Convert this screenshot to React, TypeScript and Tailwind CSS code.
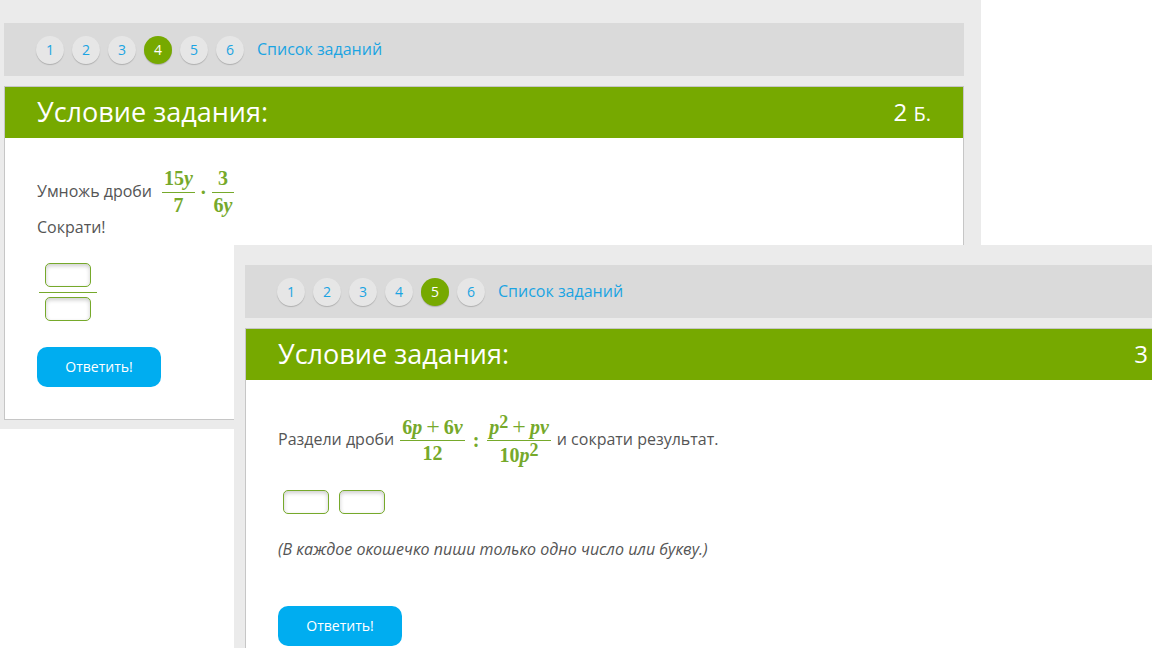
import type { ReactNode } from "react";

interface TaskNavProps {
  active: number;
}

interface TaskCardProps {
  score: ReactNode;
  headerClass: string;
  children: ReactNode;
}

interface FractionProps {
  top: ReactNode;
  bottom: ReactNode;
}

const TASKS = [1, 2, 3, 4, 5, 6];

function TaskNav({ active }: TaskNavProps) {
  return (
    <nav className="flex h-[53px] items-center bg-[#dadada] pl-8">
      <ul className="flex gap-2">
        {TASKS.map((n) => (
          <li key={n}>
            <a
              href={`#task-${n}`}
              className={
                n === active
                  ? "flex size-7 items-center justify-center rounded-full bg-[#76a900] text-sm text-white shadow-[0_1px_1px_rgba(0,0,0,0.2)]"
                  : "flex size-7 items-center justify-center rounded-full bg-[#e6e6e6] text-sm text-[#1ba4e2] shadow-[0_1px_1px_rgba(0,0,0,0.2)]"
              }
            >
              {n}
            </a>
          </li>
        ))}
      </ul>
      <a href="#tasks" className="ml-[13px] pb-[2px] text-base text-[#1ba4e2]">
        Список заданий
      </a>
    </nav>
  );
}

function TaskCard({ score, headerClass, children }: TaskCardProps) {
  return (
    <section className="mt-[10px] border border-[#c6c6c6] bg-white">
      <header className={`flex h-[51px] items-center justify-between bg-[#76a900] pl-8 text-white ${headerClass}`}>
        <h2 className="text-[27px]">Условие задания:</h2>
        <span className="pb-[2px] text-2xl">{score}</span>
      </header>
      <div className="px-8">{children}</div>
    </section>
  );
}

function Var({ children }: { children: ReactNode }) {
  return <i className="italic">{children}</i>;
}

function Sup({ children }: { children: ReactNode }) {
  return <sup className="static align-[6px] text-lg leading-none">{children}</sup>;
}

function Plus() {
  return <span className="mx-1 text-2xl leading-none font-normal">+</span>;
}

function Fraction({ top, bottom }: FractionProps) {
  return (
    <span className="inline-flex flex-col items-center text-center">
      <span className="flex h-[27px] items-center px-[2px] pb-[2px] whitespace-nowrap">
        <span className="leading-none">{top}</span>
      </span>
      <span className="h-px w-full bg-[#76a92b]" />
      <span className="flex h-[26px] items-center px-[2px] pb-[2px] whitespace-nowrap">
        <span className="leading-none">{bottom}</span>
      </span>
    </span>
  );
}

function Formula({ children }: { children: ReactNode }) {
  return (
    <span className="flex items-center font-['Liberation_Serif',serif] text-xl font-bold text-[#76a92b]">
      {children}
    </span>
  );
}

function AnswerInput({ label }: { label: string }) {
  return (
    <input
      type="text"
      aria-label={label}
      className="block h-6 w-[46px] rounded-[5px] border border-[#76a92b] bg-white px-1 text-center text-sm shadow-[inset_0_2px_4px_rgba(0,0,0,0.2)] outline-none"
    />
  );
}

function SubmitButton() {
  return (
    <button type="submit" className="block h-10 w-[124px] rounded-[10px] bg-[#00adf0] text-sm text-white">
      Ответить!
    </button>
  );
}

export default function App() {
  return (
    <div className="relative h-screen overflow-hidden bg-white font-['Open_Sans',sans-serif] text-base text-[#555]">
      <main className="mr-[171px] bg-[#ebebeb] pt-[23px] pr-[17px] pb-[9px] pl-1">
        <TaskNav active={4} />
        <TaskCard
          headerClass="pr-8"
          score={
            <>
              2 <span className="text-xl">Б.</span>
            </>
          }
        >
          <form className="pt-[27px] pb-8" onSubmit={(e) => e.preventDefault()}>
            <div className="flex items-center gap-[10px]">
              <p className="pb-[2px]">Умножь дроби</p>
              <Formula>
                <Fraction top={<>15<Var>y</Var></>} bottom="7" />
                <span className="mx-[5px]">·</span>
                <Fraction top="3" bottom={<>6<Var>y</Var></>} />
              </Formula>
            </div>
            <p className="-mt-1">Сократи!</p>
            <div className="mt-6 ml-[2px] flex w-[58px] flex-col items-center">
              <AnswerInput label="Числитель" />
              <span className="mt-[5px] mb-1 h-px w-full bg-[#76a92b]" />
              <AnswerInput label="Знаменатель" />
            </div>
            <div className="mt-[26px]">
              <SubmitButton />
            </div>
          </form>
        </TaskCard>
      </main>

      {/* second task lies over the first one */}
      <div className="absolute top-[245px] right-0 bottom-0 left-[234px] overflow-hidden bg-[#ebebeb] pt-5 pl-[11px]">
        <TaskNav active={5} />
        <div className="-mr-px">
          <TaskCard headerClass="pr-1" score="3">
            <form className="pt-[33px] pb-8" onSubmit={(e) => e.preventDefault()}>
              <div className="flex items-center gap-[6px]">
                <p className="pb-[2px]">Раздели дроби</p>
                <Formula>
                  <Fraction top={<>6<Var>p</Var><Plus />6<Var>v</Var></>} bottom="12" />
                  <span className="mx-2">:</span>
                  <Fraction
                    top={<><Var>p</Var><Sup>2</Sup><Plus /><Var>pv</Var></>}
                    bottom={<>10<Var>p</Var><Sup>2</Sup></>}
                  />
                </Formula>
                <p className="pb-[2px]">и сократи результат.</p>
              </div>
              <div className="mt-[23px] ml-[5px] flex gap-[10px]">
                <AnswerInput label="Первый множитель" />
                <AnswerInput label="Второй множитель" />
              </div>
              <p className="mt-[23px] italic">(В каждое окошечко пиши только одно число или букву.)</p>
              <div className="mt-[45px]">
                <SubmitButton />
              </div>
            </form>
          </TaskCard>
        </div>
      </div>
    </div>
  );
}
